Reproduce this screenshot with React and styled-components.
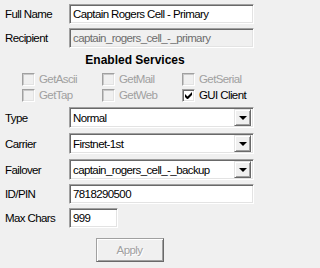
import React from "react";
import styled, { createGlobalStyle } from "styled-components";

const GlobalStyle = createGlobalStyle`
  html, body {
    margin: 0;
    padding: 0;
    background: #f0f0f0;
  }
  body {
    font-family: "Liberation Sans", Arial, sans-serif;
    font-size: 11.5px;
    letter-spacing: -0.6px;
    color: #000;
  }
`;

const Panel = styled.div`
  width: 256px;
  height: 268px;
  box-sizing: border-box;
  padding: 0 2px 0 5px;
  display: flex;
  flex-direction: column;
  background: #f0f0f0;
`;

const Row = styled.div`
  display: flex;
  align-items: center;
  margin-top: ${(p) => p.$mt || 0}px;
  height: ${(p) => p.$h || 20}px;
`;

const Label = styled.div`
  width: 64px;
  flex: none;
  white-space: nowrap;
`;

const sunken = `
  box-sizing: border-box;
  border: 1px solid;
  border-color: #a0a0a0 #fff #fff #a0a0a0;
  box-shadow: inset 1px 1px 0 #696969, inset -1px -1px 0 #e3e3e3;
`;

const TextBox = styled.div`
  ${sunken}
  height: 100%;
  width: ${(p) => p.$w || 185}px;
  padding: 0 3px;
  display: flex;
  align-items: center;
  white-space: nowrap;
  overflow: hidden;
  background: ${(p) => (p.$disabled ? "#f0f0f0" : "#fff")};
  color: ${(p) => (p.$disabled ? "#6d6d6d" : "#000")};
`;

const SelectBox = styled.div`
  ${sunken}
  height: 100%;
  width: 185px;
  padding: 2px 2px 2px 3px;
  display: flex;
  align-items: center;
  background: #fff;
`;

const SelectText = styled.span`
  flex: 1;
  white-space: nowrap;
  overflow: hidden;
`;

const ArrowButton = styled.div`
  box-sizing: border-box;
  width: 17px;
  height: 17px;
  flex: none;
  background: #f0f0f0;
  border: 1px solid;
  border-color: #e3e3e3 #696969 #696969 #e3e3e3;
  box-shadow: inset 1px 1px 0 #fff, inset -1px -1px 0 #a0a0a0;
  display: flex;
  align-items: center;
  justify-content: center;

  &::after {
    content: "";
    width: 0;
    height: 0;
    border-left: 4px solid transparent;
    border-right: 4px solid transparent;
    border-top: 4px solid #000;
    margin-top: 1px;
  }
`;

const Title = styled.div`
  margin-top: 4px;
  height: 16px;
  line-height: 16px;
  padding-left: 11px;
  text-align: center;
  font-size: 12px;
  font-weight: bold;
  letter-spacing: 0;
`;

const CheckGrid = styled.div`
  margin-top: 3px;
  margin-left: 17px;
  display: grid;
  grid-template-columns: repeat(3, 80px);
  grid-auto-rows: 16px;
`;

const CheckItem = styled.div`
  display: flex;
  align-items: center;
  gap: 4px;
  white-space: nowrap;
  color: ${(p) => (p.$disabled ? "#a0a0a0" : "#000")};
`;

const Box = styled.div`
  ${sunken}
  width: 13px;
  height: 13px;
  flex: none;
  background: ${(p) => (p.$disabled ? "#f0f0f0" : "#fff")};
  box-shadow: ${(p) =>
    p.$disabled
      ? "inset 1px 1px 0 #c8c8c8, inset -1px -1px 0 #e3e3e3"
      : "inset 1px 1px 0 #696969, inset -1px -1px 0 #e3e3e3"};
  display: flex;
  align-items: center;
  justify-content: center;
`;

const ButtonRow = styled.div`
  margin-top: 10px;
  display: flex;
  justify-content: center;
`;

const Button = styled.div`
  box-sizing: border-box;
  width: 68px;
  height: 24px;
  border: 1px solid;
  border-color: #a0a0a0 #696969 #696969 #a0a0a0;
  box-shadow: inset 1px 1px 0 #fff, inset -1px -1px 0 #a0a0a0;
  display: flex;
  align-items: center;
  justify-content: center;
  color: #a0a0a0;
  text-shadow: 1px 1px 0 #fff;
`;

const Check = () => (
  <svg width="7" height="7" viewBox="0 0 7 7">
    <path d="M0 2v3l2 2h1l4-4V0L2.5 4.5z" fill="#000" />
  </svg>
);

const services = [
  { name: "GetAscii", enabled: false },
  { name: "GetMail", enabled: false },
  { name: "GetSerial", enabled: false },
  { name: "GetTap", enabled: false },
  { name: "GetWeb", enabled: false },
  { name: "GUI Client", enabled: true, checked: true },
];

function Select({ value }) {
  return (
    <SelectBox>
      <SelectText>{value}</SelectText>
      <ArrowButton />
    </SelectBox>
  );
}

export default function App() {
  return (
    <Panel>
      <GlobalStyle />
      <Row $mt={4}>
        <Label>Full Name</Label>
        <TextBox>Captain Rogers Cell - Primary</TextBox>
      </Row>
      <Row $mt={4}>
        <Label>Recipient</Label>
        <TextBox $disabled>captain_rogers_cell_-_primary</TextBox>
      </Row>
      <Title>Enabled Services</Title>
      <CheckGrid>
        {services.map((s) => (
          <CheckItem key={s.name} $disabled={!s.enabled}>
            <Box $disabled={!s.enabled}>{s.checked && <Check />}</Box>
            {s.name}
          </CheckItem>
        ))}
      </CheckGrid>
      <Row $mt={4} $h={21}>
        <Label>Type</Label>
        <Select value="Normal" />
      </Row>
      <Row $mt={5} $h={21}>
        <Label>Carrier</Label>
        <Select value="Firstnet-1st" />
      </Row>
      <Row $mt={5} $h={21}>
        <Label>Failover</Label>
        <Select value="captain_rogers_cell_-_backup" />
      </Row>
      <Row $mt={4}>
        <Label>ID/PIN</Label>
        <TextBox>7818290500</TextBox>
      </Row>
      <Row $mt={4}>
        <Label>Max Chars</Label>
        <TextBox $w={49}>999</TextBox>
      </Row>
      <ButtonRow>
        <Button>Apply</Button>
      </ButtonRow>
    </Panel>
  );
}
